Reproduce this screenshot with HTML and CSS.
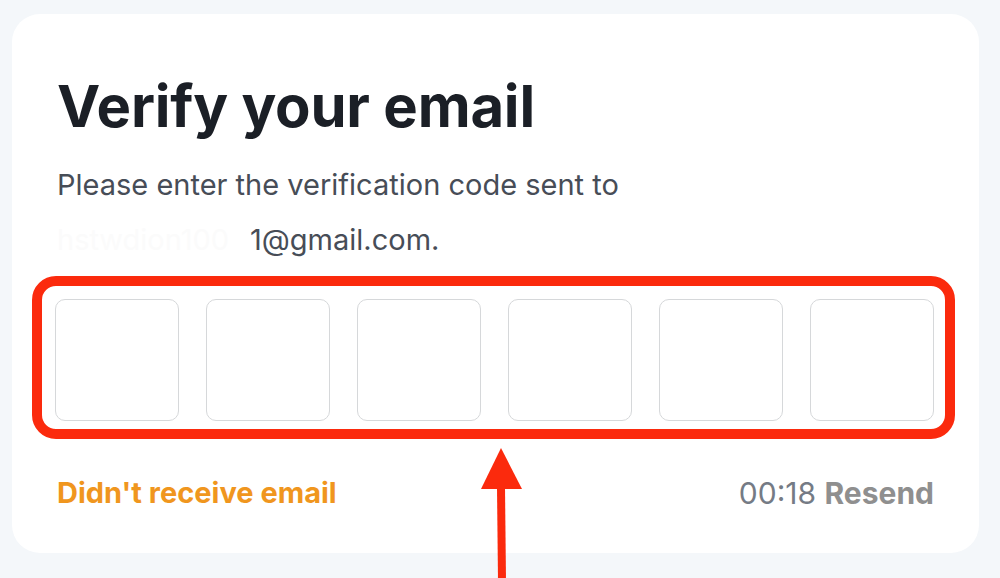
FILE: index.html
```html
<!DOCTYPE html>
<html lang="en">
<head>
<meta charset="utf-8">
<title>Verify your email</title>
<link rel="stylesheet" href="styles.css">
</head>
<body>
<div class="page">
  <div class="card">
    <h1 class="title">Verify your email</h1>
    <p class="desc">Please enter the verification code sent to<br><span class="redacted">hstwdion100</span>1@gmail.com.</p>
    <div class="code-wrap">
      <div class="code-row">
        <div class="cell"></div>
        <div class="cell"></div>
        <div class="cell"></div>
        <div class="cell"></div>
        <div class="cell"></div>
        <div class="cell"></div>
      </div>
      <div class="highlight"></div>
    </div>
    <div class="footer">
      <a class="no-email">Didn't receive email</a>
      <div class="resend"><span class="timer">00:18</span> <span class="resend-btn">Resend</span></div>
    </div>
  </div>
  <svg class="arrow" width="50" height="134" viewBox="0 0 50 134">
    <polygon points="23,2 3,43 44,43" fill="#fb2a0d"/>
    <polygon points="19,42 27,42 28,134 20,134" fill="#fb2a0d"/>
  </svg>
</div>
</body>
</html>
```

FILE: styles.css
```css
* { box-sizing: border-box; }
html, body { margin: 0; padding: 0; }
body {
  width: 1000px;
  height: 578px;
  background: #f4f7fa;
  font-family: Inter, "Open Sans", "Liberation Sans", sans-serif;
  overflow: hidden;
}
.page {
  position: relative;
  width: 1000px;
  height: 578px;
  padding: 14px 21px 25px 12px;
}
.card {
  width: 967px;
  height: 539px;
  background: #ffffff;
  border-radius: 28px;
  padding: 60px 45px 0 45px;
  display: flex;
  flex-direction: column;
}
.title {
  margin: 0;
  font-size: 58px;
  line-height: 64px;
  font-weight: 700;
  color: #1b1f26;
  letter-spacing: -0.2px;
}
.desc {
  margin: 19px 0 0 0;
  font-size: 29px;
  line-height: 55px;
  color: #474d57;
}
.redacted {
  display: inline-block;
  width: 193px;
  overflow: hidden;
  white-space: nowrap;
  vertical-align: bottom;
  color: #fbfbfb;
}
.code-wrap {
  position: relative;
  margin-top: 32px;
  margin-left: -2px;
}
.code-row {
  display: flex;
  gap: 27px;
}
.cell {
  flex: 1;
  height: 122px;
  border: 1.5px solid #d6d8da;
  border-radius: 10px;
  background: #fff;
}
.highlight {
  position: absolute;
  left: -23px;
  right: -21px;
  top: -23px;
  bottom: -18px;
  border: 10px solid #fb2a0d;
  border-radius: 24px;
}
.footer {
  margin-top: 52px;
  display: flex;
  justify-content: space-between;
  align-items: center;
  font-size: 29px;
  line-height: 40px;
}
.no-email {
  color: #f0961e;
  font-weight: 700;
}
.resend { font-size: 30px; }
.timer { color: #757b85; }
.resend-btn { color: #8f8f8f; font-weight: 700; }
.arrow {
  position: absolute;
  left: 478px;
  top: 446px;
}
```
